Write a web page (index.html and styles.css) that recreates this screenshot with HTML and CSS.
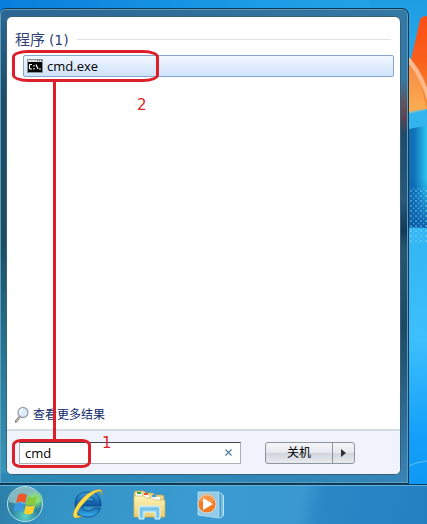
FILE: index.html
```html
<!DOCTYPE html>
<html lang="zh-CN">
<head>
<meta charset="utf-8">
<title>开始菜单</title>
<link rel="stylesheet" href="styles.css">
</head>
<body>
<svg class="wallpaper" viewBox="0 0 57 484" aria-hidden="true">
  <defs>
    <linearGradient id="sky" x1="0" y1="0" x2="0" y2="1">
      <stop offset="0" stop-color="#1f9de4"/><stop offset=".24" stop-color="#32b4ee"/><stop offset=".5" stop-color="#34b6f4"/><stop offset=".7" stop-color="#3cbffb"/><stop offset=".9" stop-color="#14a0fa"/><stop offset="1" stop-color="#0f98f4"/>
    </linearGradient>
    <linearGradient id="flag" x1="0" y1="0" x2="0" y2="1">
      <stop offset="0" stop-color="#ff4e14"/><stop offset=".45" stop-color="#f8601c"/><stop offset="1" stop-color="#f8a040"/>
    </linearGradient>
    <linearGradient id="pane" x1="0" y1="0" x2="1" y2="0">
      <stop offset="0" stop-color="#0c62a8"/><stop offset=".65" stop-color="#1070b8"/><stop offset="1" stop-color="#2cc4f0"/>
    </linearGradient>
    <linearGradient id="shade" x1="0" y1="0" x2="0" y2="1">
      <stop offset="0" stop-color="#0a60b0" stop-opacity="0"/><stop offset="1" stop-color="#0a58a4"/>
    </linearGradient>
    <pattern id="dots" width="5" height="5" patternUnits="userSpaceOnUse">
      <circle cx="1" cy="1" r="1" fill="#8be0ff"/><circle cx="3.5" cy="3.5" r=".9" fill="#5cc8f4"/>
    </pattern>
  </defs>
  <rect width="57" height="484" fill="url(#sky)"/>
  <path d="M28 116 50 20q1-4 7-4v93q-15 1-29 7z" fill="url(#flag)"/>
  <path d="M38 56q12 13 18 54l-18 4z" fill="#ffd080" opacity=".35"/>
  <path d="M36 54q14 13 21 34v12Q48 72 36 61z" fill="#ffc49c" opacity=".85"/>
  <path d="M20 135q18-7 37-9v102q-17-2-37 1z" fill="url(#pane)"/>
  <path d="M20 178h37v50q-17-2-37 1z" fill="url(#shade)"/>
  <path d="M20 188h37v56H20z" fill="url(#dots)" opacity=".55"/>
  <path d="M38 466q9-4 19-5" fill="none" stroke="#76d2ff" opacity=".7"/>
</svg>

<main class="start-menu">
  <div class="panel">
    <section class="results">
      <h1 class="group-title"><span>程序 <span class="count">(1)</span></span></h1>
      <a class="result" href="#cmd">
        <svg width="16" height="14" viewBox="0 0 16 14" aria-hidden="true">
          <path fill="#8c9299" d="M0 0h16v14H0z"/><path fill="#d6dade" d="M1 1h14v2H1z"/><path fill="#000" d="M1 3h14v10H1z"/>
          <path d="M10 1.500h1M12 1.500h1M14 1.500h1" stroke="#58606c"/>
          <path d="M5 5.500H3L2.500 6v3.500l.5.500h2M7 6v1.500M7 9v1.500M9 5.500l2 4.500M12 10h2" fill="none" stroke="#fff" stroke-width="1.200"/>
        </svg>
        <span>cmd.exe</span>
      </a>
      <a class="more" href="#more">
        <svg width="16" height="18" viewBox="0 0 16 18" aria-hidden="true">
          <path d="M5 10.500.8 15.500" stroke="#8c8580" stroke-width="2.600" stroke-linecap="round"/>
          <path d="M4.500 11 1 15" stroke="#d8d0c8"/>
          <circle cx="8" cy="6.500" r="5" fill="#dcebf8" stroke="#98a2b0" stroke-width="1.300"/>
          <path d="M5 6.500q0-3 3-3.500" fill="none" stroke="#fff" stroke-width="1.500"/>
        </svg>
        <span>查看更多结果</span>
      </a>
    </section>
    <footer class="actions">
      <div class="search">
        <input type="text" value="cmd" aria-label="搜索程序和文件">
        <button class="clear" type="button" aria-label="清除">
          <svg width="7" height="7" viewBox="0 0 7 7" aria-hidden="true"><path d="M.5.500l6 6M6.500.500l-6 6" stroke="#4a80a8" stroke-width="1.200"/></svg>
        </button>
      </div>
      <div class="power">
        <button class="shutdown" type="button">关机</button>
        <button class="options" type="button" aria-label="关机选项">
          <svg width="5" height="8" viewBox="0 0 5 8" aria-hidden="true"><path d="M0 0l5 4-5 4z" fill="#2c2f36"/></svg>
        </button>
      </div>
    </footer>
  </div>
</main>

<nav class="taskbar" aria-label="任务栏">
  <button type="button" aria-label="开始">
    <svg width="38" height="38" viewBox="0 0 38 38" aria-hidden="true">
      <defs>
        <radialGradient id="orb" cx=".5" cy=".85" r=".85"><stop offset="0" stop-color="#5ed4c4"/><stop offset=".45" stop-color="#2c83a0"/><stop offset="1" stop-color="#4a8c9e"/></radialGradient>
        <radialGradient id="glow"><stop offset=".3" stop-color="#8cec68" stop-opacity=".8"/><stop offset="1" stop-color="#8cec68" stop-opacity="0"/></radialGradient>
      </defs>
      <circle cx="20" cy="18" r="17.500" fill="url(#orb)" stroke="#b4e4ec"/>
      <path d="M4 16a16 15 0 0 1 32 0q-16 5-32 0z" fill="#d6f2ee" opacity=".45"/>
      <circle cx="30" cy="14" r="10" fill="url(#glow)"/>
      <path d="M13 9q4-3 9 0l-2 8q-4-3-9 0z" fill="#ee5728"/>
      <path d="M23 10q4 3 9 0l-2 8q-5 3-9 0z" fill="#8acb3c"/>
      <path d="M10 18q5-3 9 0l-2 8q-4-3-9 0z" fill="#3c98e0"/>
      <path d="M21 19q4 3 9 0l-2 8q-5 3-9 0z" fill="#ffd02c"/>
    </svg>
  </button>
  <button type="button" aria-label="Internet Explorer">
    <svg width="36" height="38" viewBox="0 0 36 38" aria-hidden="true">
      <defs><linearGradient id="ie" x1="0" y1="0" x2="0" y2="1"><stop offset="0" stop-color="#3c9cdc"/><stop offset=".5" stop-color="#0c59a8"/><stop offset="1" stop-color="#38b4ee"/></linearGradient></defs>
      <path d="M32 20H13.500q.5 5 6 5 4 0 5-3h7q-3 9-12.500 9Q6 31 6 18.500 6 6 19 6q13.500 0 13 14zM25 15q-.5-4-5.500-4t-6 4z" fill="url(#ie)" stroke="#0c4480" stroke-width=".8" fill-rule="evenodd"/>
      <path d="M33 9q1-6-4-5.500Q19 5 9.500 17 1 30 6 32q3 .5 7-2-4 1-5-1-.5-4 6.500-11.500Q23 7.500 29 5.500q4-1 4 3.500z" fill="#ffdc48" stroke="#c59a22" stroke-width=".5"/>
    </svg>
  </button>
  <button type="button" aria-label="Windows 资源管理器">
    <svg width="36" height="38" viewBox="0 0 36 38" aria-hidden="true">
      <defs><linearGradient id="folder" x1="0" y1="0" x2="0" y2="1"><stop offset="0" stop-color="#fff4b8"/><stop offset="1" stop-color="#e8cd6c"/></linearGradient></defs>
      <path d="M3 7q0-2 2-2h8l2 2h7l1 2h8q2 0 2 2v20H3z" fill="#ead48a" stroke="#b79b4e" stroke-width=".7"/>
      <path d="M5 7h6v3H5zM12 9h6v3h-6zM20 11h9v3h-9z" fill="#fff"/>
      <path d="M6 6h4v2H6z" fill="#2fac4c"/><path d="M13 7h4v2h-4z" fill="#e05b3c"/><path d="M21 9h4v2h-4z" fill="#419bd0"/>
      <path d="M3 10h10l2 2h6l2 2h11v17H3z" fill="url(#folder)" stroke="#c5ab5b" stroke-width=".6"/>
      <path d="M8 33V22q0-2 2-2h17q2 0 2 2v11h-5v-7H13v7z" fill="#8ed2f2" stroke="#dcf6ff"/>
      <path d="M10 31v-8h17v8" fill="none" stroke="#4aa6d4" opacity=".7"/>
    </svg>
  </button>
  <button type="button" aria-label="Windows Media Player">
    <svg width="36" height="38" viewBox="-4 0 36 38" aria-hidden="true">
      <path d="M23 7l2 1v23l-2 1M26.500 9v21" fill="none" stroke="#bde2f5"/>
      <path d="M1 6h21v26L1 29z" fill="#94cbe8" stroke="#c6e8f7" stroke-width=".7"/>
      <circle cx="10" cy="18" r="9" fill="#f27a20" stroke="#d9dbd4"/>
      <path d="M2 15a8 8 0 0 1 16 0q-8 3-16 0z" fill="#ffb06a" opacity=".5"/>
      <path d="M6 12l10 6-10 6z" fill="#fff"/>
    </svg>
  </button>
</nav>

<div class="mark mark-result"></div>
<div class="mark mark-search"></div>
<div class="mark-link"></div>
<span class="step step-one">1</span>
<span class="step step-two">2</span>
</body>
</html>
```

FILE: styles.css
```css
* { box-sizing: border-box; }

body {
  position: relative;
  display: flex;
  flex-direction: column;
  min-height: 100vh;
  margin: 0;
  overflow-x: hidden;
  background: linear-gradient(90deg, #087fdc, #1c9be5 60%, #28a5e6);
  color: #000;
  font: 13px/20px "Open Sans", "Noto Sans CJK SC", sans-serif;
}

button, input { font: inherit; color: inherit; }
a { color: inherit; text-decoration: none; }
svg { display: block; flex: none; }

.wallpaper {
  position: absolute;
  top: 0;
  right: 0;
  width: 57px;
  height: 484px;
}

.start-menu {
  position: relative;
  display: flex;
  flex: 1;
  margin: 8px 18px 0 0;
  padding: 7px 7px 8px 6px;
  border: 1px solid #12354f;
  border-left: 0;
  border-radius: 6px 7px 0 0;
  box-shadow: inset 0 0 0 1px #5d9dbd;
  background:
    linear-gradient(#3478a5 0 70px, #64505a 95px, #5c4250 110px, #1d4b6b 125px, #27587a 190px, #123a58 222px, #28566f 240px, #1d4a62 320px, #2d6991 400px, #3a85b8) right / 10px 100% no-repeat,
    linear-gradient(90deg, #2c88b5, #3286b8) bottom / 100% 10px no-repeat,
    linear-gradient(90deg, #2b6693, #3478a5) top / 100% 12px no-repeat,
    linear-gradient(#2b6690, #1b4d68 90px, #1b4d62 230px, #2a7a98 360px, #3898bd);
}

.panel {
  display: flex;
  flex: 1;
  flex-direction: column;
  border: 1px solid #37617a;
  border-radius: 6px;
  background: #fff;
  overflow: hidden;
}

.results {
  display: flex;
  flex: 1;
  flex-direction: column;
  padding: 11px 6px 4px 8px;
}

.group-title {
  display: flex;
  align-items: center;
  gap: 8px;
  margin: 0;
  color: #2f3f73;
  font-size: 15px;
  font-weight: 400;
  line-height: 22px;
}

.group-title::after {
  flex: 1;
  height: 1px;
  margin-right: 3px;
  background: #dfe2e6;
  content: "";
}

.count, .step { font-family: "DejaVu Sans", sans-serif; }
.count { font-size: 14px; }

.result {
  display: flex;
  align-items: center;
  gap: 4px;
  height: 22px;
  margin: 4px 0 0 8px;
  padding-left: 3px;
  border: 1px solid #86a5cc;
  border-radius: 2px;
  background: linear-gradient(#f1f7fe, #cfe3fb);
}

.more {
  display: flex;
  align-items: center;
  gap: 2px;
  margin-top: auto;
  color: #10296b;
  font-size: 12px;
}

.actions {
  display: flex;
  align-items: center;
  gap: 24px;
  height: 45px;
  padding: 0 45px 0 12px;
  border-top: 2px solid #d2dbe6;
  background: #f0f3fb;
}

.search {
  display: flex;
  flex: 1;
  height: 22px;
  border: 1px solid #a9b0ba;
  border-top-color: #40444c;
  background: #fff;
}

.search input {
  flex: 1;
  min-width: 0;
  padding: 0 5px;
  border: 0;
  outline: 0;
  background: none;
}

.clear {
  display: grid;
  place-items: center;
  width: 24px;
  padding: 0;
  border: 0;
  background: none;
}

.power { display: flex; }

.power button {
  display: grid;
  place-items: center;
  height: 22px;
  padding: 0;
  border: 1px solid #8e949e;
  background: linear-gradient(#f5f6f9, #e5e8ed 48%, #cfd3da 50%, #e9ebf0);
}

.power .shutdown {
  width: 68px;
  border-radius: 3px 0 0 3px;
  font-size: 12px;
}

.power .options {
  width: 23px;
  margin-left: -1px;
  border-radius: 0 3px 3px 0;
}

.taskbar {
  position: relative;
  display: flex;
  align-items: center;
  gap: 26px;
  height: 40px;
  padding-left: 5px;
  border-top: 1px solid #0d3d5e;
  box-shadow: inset 0 1px #62b3da;
  background: linear-gradient(100deg, #2c7fa8, #3493c4 12%, #3a9bd2 45%, #3b98d0 70%, #2b87c6 75%, #2580c2);
}

.taskbar button {
  padding: 0;
  border: 0;
  background: none;
}

.mark, .mark-link, .step { position: absolute; pointer-events: none; }

.mark {
  left: 12px;
  border: 3px solid #dc1f28;
}

.mark-result {
  top: 50px;
  width: 147px;
  height: 32px;
  border-radius: 16px / 7px;
}

.mark-search {
  bottom: 56px;
  width: 79px;
  height: 29px;
  border-radius: 9px / 6px;
}

.mark-link {
  top: 80px;
  bottom: 83px;
  left: 53px;
  width: 3px;
  background: #dc1f28;
}

.step {
  color: #dc1f28;
  font-size: 15px;
}

.step-one { bottom: 71px; left: 102px; }
.step-two { top: 95px; left: 137px; }
```
